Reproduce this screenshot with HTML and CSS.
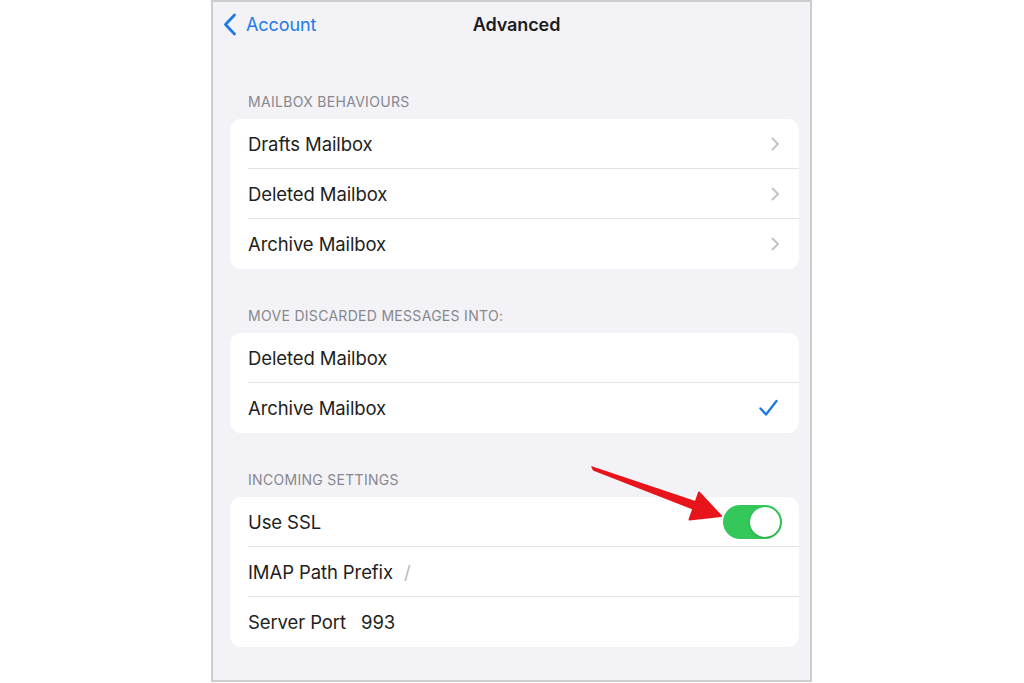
FILE: index.html
```html
<!DOCTYPE html>
<html>
<head>
<meta charset="utf-8">
<link rel="stylesheet" href="styles.css">
</head>
<body>
<div class="page">
  <div class="phone">
    <div class="nav">
      <div class="back">
        <svg class="back-chev" width="14" height="23" viewBox="0 0 14 23"><path d="M11.5 2 L2.5 11.5 L11.5 21" fill="none" stroke="#1f7ae6" stroke-width="2.8" stroke-linecap="round" stroke-linejoin="round"/></svg>
        <span>Account</span>
      </div>
      <div class="title">Advanced</div>
    </div>

    <div class="section first">
      <div class="sec-head">MAILBOX BEHAVIOURS</div>
      <div class="card">
        <div class="row"><span class="label">Drafts Mailbox</span><svg class="chev" width="9" height="14" viewBox="0 0 9 14"><path d="M1.5 1.5 L7 7 L1.5 12.5" fill="none" stroke="#c4c4c8" stroke-width="2" stroke-linecap="round" stroke-linejoin="round"/></svg></div>
        <div class="row"><span class="label">Deleted Mailbox</span><svg class="chev" width="9" height="14" viewBox="0 0 9 14"><path d="M1.5 1.5 L7 7 L1.5 12.5" fill="none" stroke="#c4c4c8" stroke-width="2" stroke-linecap="round" stroke-linejoin="round"/></svg></div>
        <div class="row"><span class="label">Archive Mailbox</span><svg class="chev" width="9" height="14" viewBox="0 0 9 14"><path d="M1.5 1.5 L7 7 L1.5 12.5" fill="none" stroke="#c4c4c8" stroke-width="2" stroke-linecap="round" stroke-linejoin="round"/></svg></div>
      </div>
    </div>

    <div class="section">
      <div class="sec-head">MOVE DISCARDED MESSAGES INTO:</div>
      <div class="card">
        <div class="row"><span class="label">Deleted Mailbox</span></div>
        <div class="row"><span class="label">Archive Mailbox</span><svg class="check" width="19" height="18" viewBox="0 0 19 18"><path d="M1.5 9.5 L7 15.5 L17.5 2" fill="none" stroke="#1f7ae6" stroke-width="2.4" stroke-linecap="round" stroke-linejoin="round"/></svg></div>
      </div>
    </div>

    <div class="section">
      <div class="sec-head">INCOMING SETTINGS</div>
      <div class="card">
        <div class="row"><span class="label">Use SSL</span><div class="toggle"><div class="knob"></div></div></div>
        <div class="row"><span class="label">IMAP Path Prefix</span><span class="value muted">/</span></div>
        <div class="row"><span class="label">Server Port</span><span class="value port">993</span></div>
      </div>
    </div>
  </div>

  <svg class="arrow" width="1024" height="683" viewBox="0 0 1024 683">
    <path d="M591 466 L593 470.5 L694 510 L697 501.5 Z" fill="#e8141c"/>
    <path d="M721 516 L699 492.5 L689.5 519.5 Z" fill="#e8141c" stroke="#e8141c" stroke-width="2" stroke-linejoin="round"/>
  </svg>
</div>
</body>
</html>
```

FILE: styles.css
```css
* { box-sizing: border-box; }
html, body { margin: 0; padding: 0; background: #ffffff; }
body { font-family: Inter, "Liberation Sans", sans-serif; color: #1c1c1e; }

.page { position: relative; width: 1024px; height: 683px; overflow: hidden; }

.phone {
  margin-left: 211px;
  width: 601px;
  height: 682px;
  background: #f2f2f7;
  border: 2px solid #cdcdd0;
  padding: 0 11px 0 17px;
}

.nav {
  position: relative;
  height: 44px;
  display: flex;
  align-items: center;
  justify-content: center;
}
.back {
  position: absolute;
  left: -7px;
  top: 0;
  height: 44px;
  display: flex;
  align-items: center;
  gap: 9px;
  color: #1f7ae6;
  font-size: 18px;
  letter-spacing: -0.1px;
}
.back-chev { display: block; }
.title {
  font-size: 18px;
  font-weight: 600;
  margin-left: 4px;
  letter-spacing: -0.1px;
}

.section { margin-top: 38px; }
.section.first { margin-top: 47px; }
.sec-head {
  height: 18px;
  line-height: 18px;
  font-size: 14px;
  color: #88888d;
  padding-left: 18px;
  margin-bottom: 8px;
  letter-spacing: 0.3px;
}
.card {
  background: #ffffff;
  border-radius: 11px;
  overflow: hidden;
}
.row {
  height: 50px;
  margin-left: 18px;
  padding-right: 19px;
  display: flex;
  align-items: center;
  border-bottom: 1px solid #e2e2e5;
}
.row:last-child { border-bottom: none; }
.label { font-size: 18.5px; letter-spacing: -0.1px; color: #1e1e20; }
.chev { margin-left: auto; display: block; }
.check { margin-left: auto; margin-right: 2px; display: block; }
.value { font-size: 18.5px; }
.muted { color: #b8b8bc; margin-left: 11px; }
.port { color: #1e1e20; margin-left: 15px; }

.toggle {
  margin-left: auto;
  margin-right: -2px;
  width: 59px;
  height: 34px;
  border-radius: 17px;
  background: #34c759;
  padding: 2px;
  display: flex;
  justify-content: flex-end;
}
.knob {
  width: 30px;
  height: 30px;
  border-radius: 50%;
  background: #ffffff;
  box-shadow: 0 1px 3px rgba(0,0,0,0.18);
}

.arrow { position: absolute; left: 0; top: 0; pointer-events: none; }
```
